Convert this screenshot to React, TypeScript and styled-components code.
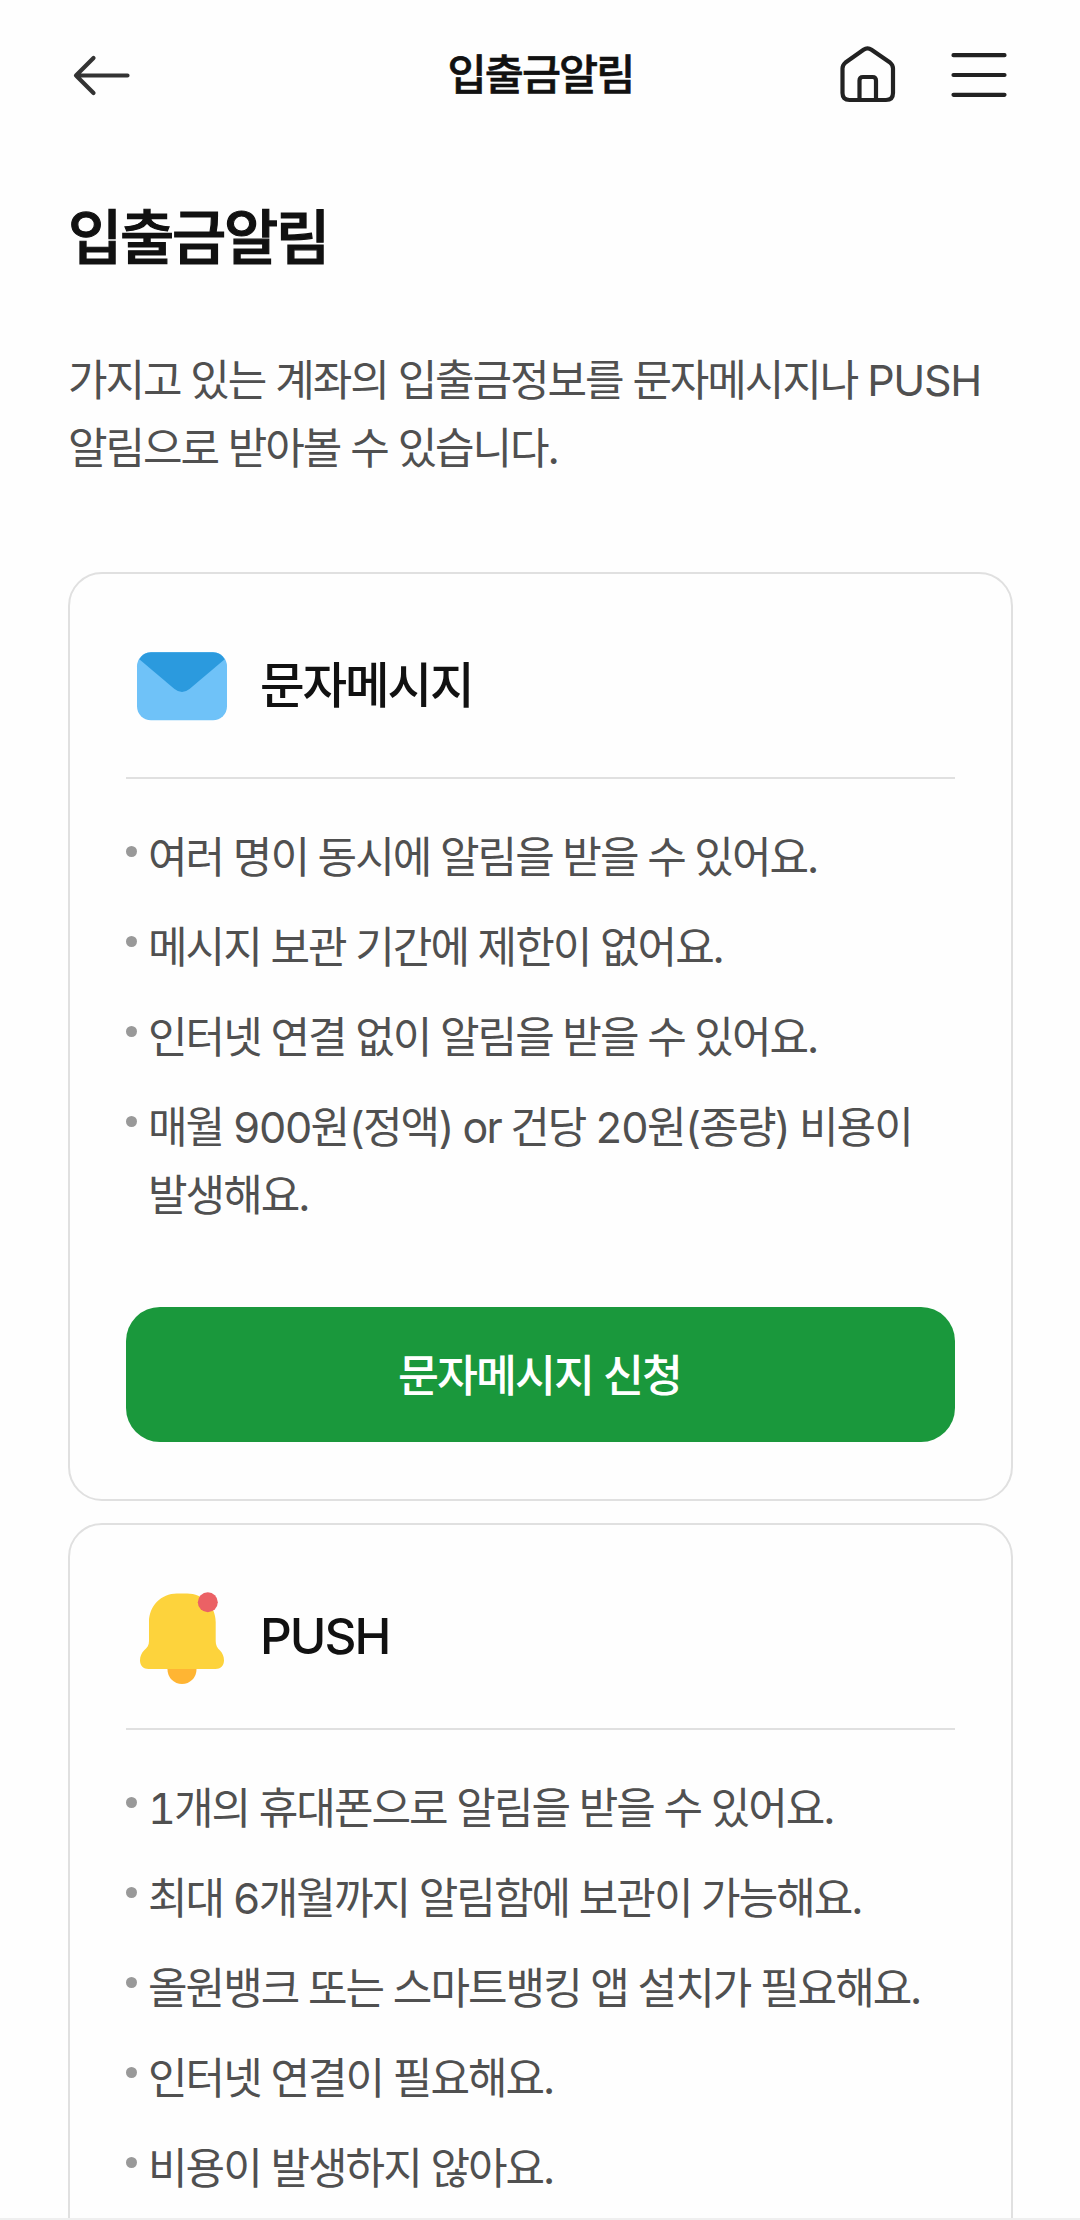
import React from "react";
import styled, { createGlobalStyle } from "styled-components";

const GlobalStyle = createGlobalStyle`
  * { box-sizing: border-box; }
  html, body { margin: 0; padding: 0; background: #fff; }
  body {
    height: 2220px;
    overflow: hidden;
    font-family: Inter, "Noto Sans CJK KR", sans-serif;
    color: #111;
    word-break: keep-all;
  }
`;

const Page = styled.div`
  width: 1080px;
  height: 2220px;
  display: flex;
  flex-direction: column;
  overflow: hidden;
  background: #fefefe;
  border-bottom: 2px solid #efefef;
`;

const Header = styled.header`
  flex: none;
  height: 150px;
  padding: 0 67px 0 68px;
  display: grid;
  grid-template-columns: 1fr auto 1fr;
  align-items: center;
`;

const HeaderTitle = styled.div`
  font-size: 42.5px;
  line-height: 60px;
  font-weight: 500;
  -webkit-text-stroke: 0.6px #111;
  letter-spacing: -1.9px;
`;

const HeaderActions = styled.div`
  display: flex;
  justify-content: flex-end;
  gap: 44px;
`;

const IconButton = styled.button`
  width: 68px;
  height: 68px;
  padding: 0;
  border: 0;
  background: none;
  display: block;
  svg { display: block; }
`;

const Main = styled.main`
  flex: none;
  padding: 0 67px 0 68px;
`;

const PageTitle = styled.h1`
  margin: 46px 0 0;
  font-size: 59px;
  line-height: 84px;
  font-weight: 500;
  -webkit-text-stroke: 1.2px #111;
  letter-spacing: -2.3px;
`;

const Description = styled.p`
  margin: 67px 0 0;
  font-size: 43px;
  line-height: 67.5px;
  letter-spacing: -2.1px;
  color: #505050;
`;

const Latin = styled.span`
  letter-spacing: -1.3px;
`;

const Cards = styled.div`
  margin-top: 90px;
  display: flex;
  flex-direction: column;
  gap: 22px;
`;

const Card = styled.section`
  border: 2px solid #e0e0e0;
  border-radius: 34px;
  padding: 56px 56px 57px;
`;

const CardHead = styled.div`
  height: 149px;
  padding-bottom: 35px;
  display: flex;
  align-items: center;
  gap: 22px;
  border-bottom: 2px solid #e0e0e0;
  svg { flex: none; }
`;

const CardTitle = styled.h2<{ $latin?: boolean }>`
  margin: 0;
  padding-bottom: ${(p) => (p.$latin ? "2px" : "0")};
  font-size: ${(p) => (p.$latin ? "49.5px" : "48.5px")};
  line-height: 68px;
  font-weight: 500;
  letter-spacing: ${(p) => (p.$latin ? "-2px" : "-2.1px")};
`;

const List = styled.ul`
  list-style: none;
  margin: 45px 0 0;
  padding: 0;
  display: flex;
  flex-direction: column;
  gap: 22.5px;
`;

const Item = styled.li`
  display: flex;
  font-size: 43px;
  line-height: 67.5px;
  letter-spacing: -1.96px;
  font-variant-numeric: tabular-nums;
  color: #505050;
`;

const Bullet = styled.span`
  flex: none;
  width: 11px;
  height: 11px;
  margin: 22px 11px 0 0;
  border-radius: 50%;
  background: #999;
`;

const ApplyButton = styled.button`
  width: 100%;
  height: 135px;
  margin-top: 78px;
  padding: 0 2px 5px 0;
  border: 0;
  border-radius: 34px;
  background: #1a983c;
  color: #fff;
  font-family: inherit;
  font-size: 44.5px;
  font-weight: 500;
  letter-spacing: -1.9px;
  display: block;
`;

const BackIcon = () => (
  <svg width="68" height="68" viewBox="0 0 68 68" fill="none" stroke="#333" strokeWidth="4.2" strokeLinecap="round" strokeLinejoin="round">
    <path d="M59.5 34.500H8M25.500 17L8 34.500L25.500 52" />
  </svg>
);

const HomeIcon = () => (
  <svg width="68" height="68" viewBox="0 0 68 68" fill="none" stroke="#222" strokeWidth="4.2" strokeLinejoin="round">
    <path d="M9.500 27.5Q9.500 24 12.500 21.5L30.500 8.8Q34.500 6 38.500 8.8L57 21.5Q60 24 60 27.5V52Q60 59 53 59H16.500Q9.500 59 9.500 52Z" />
    <path d="M26.500 58V39.5Q26.500 36 30 36H39.500Q43 36 43 39.500V58" />
  </svg>
);

const MenuIcon = () => (
  <svg width="68" height="68" viewBox="0 0 68 68" fill="none" stroke="#222" strokeWidth="4.2" strokeLinecap="round">
    <path d="M8.500 14.200H59.500M8.500 34H59.500M8.500 53.800H59.500" />
  </svg>
);

const MailIcon = () => (
  <svg width="112" height="112" viewBox="0 0 112 112">
    <rect x="11" y="22.300" width="90" height="68" rx="14" fill="#6fc2f8" />
    <path d="M13.300 29.200Q17.500 22.300 25 22.300H87Q94.500 22.300 98.700 29.200L63.500 59Q56 65 48.500 59Z" fill="#2b9ade" />
  </svg>
);

const BellIcon = () => (
  <svg width="112" height="112" viewBox="0 0 112 112">
    <circle cx="56" cy="88.500" r="14.500" fill="#ffb533" />
    <path d="M23 41C23 25 35 12.500 51 12.500H61C77 12.500 89.700 25 89.700 41V60C89.700 64 91 67 94 69.500C96.500 72 98 75.500 98 79.500C98 84.500 94.500 88 89.500 88H22.500C17.500 88 14 84.500 14 79.500C14 75.500 15.500 72 18 69.500C21.500 66.500 23 64 23 60Z" fill="#fdd33c" />
    <circle cx="81.800" cy="21.300" r="10" fill="#eb6165" />
  </svg>
);

type InfoCardProps = {
  icon: React.ReactNode;
  title: string;
  latinTitle?: boolean;
  items: string[];
  action?: string;
};

const InfoCard = ({ icon, title, latinTitle, items, action }: InfoCardProps) => (
  <Card>
    <CardHead>
      {icon}
      <CardTitle $latin={latinTitle}>{title}</CardTitle>
    </CardHead>
    <List>
      {items.map((item) => (
        <Item key={item}>
          <Bullet />
          <span>{item}</span>
        </Item>
      ))}
    </List>
    {action && <ApplyButton>{action}</ApplyButton>}
  </Card>
);

export default function App() {
  return (
    <>
      <GlobalStyle />
      <Page>
        <Header>
          <IconButton aria-label="이전"><BackIcon /></IconButton>
          <HeaderTitle>입출금알림</HeaderTitle>
          <HeaderActions>
            <IconButton aria-label="홈"><HomeIcon /></IconButton>
            <IconButton aria-label="메뉴"><MenuIcon /></IconButton>
          </HeaderActions>
        </Header>
        <Main>
          <PageTitle>입출금알림</PageTitle>
          <Description>
            가지고 있는 계좌의 입출금정보를 문자메시지나 <Latin>PUSH</Latin> 알림으로 받아볼 수 있습니다.
          </Description>
          <Cards>
            <InfoCard
              icon={<MailIcon />}
              title="문자메시지"
              items={[
                "여러 명이 동시에 알림을 받을 수 있어요.",
                "메시지 보관 기간에 제한이 없어요.",
                "인터넷 연결 없이 알림을 받을 수 있어요.",
                "매월 900원(정액) or 건당 20원(종량) 비용이 발생해요.",
              ]}
              action="문자메시지 신청"
            />
            <InfoCard
              icon={<BellIcon />}
              title="PUSH"
              latinTitle
              items={[
                "1개의 휴대폰으로 알림을 받을 수 있어요.",
                "최대 6개월까지 알림함에 보관이 가능해요.",
                "올원뱅크 또는 스마트뱅킹 앱 설치가 필요해요.",
                "인터넷 연결이 필요해요.",
                "비용이 발생하지 않아요.",
              ]}
            />
          </Cards>
        </Main>
      </Page>
    </>
  );
}
